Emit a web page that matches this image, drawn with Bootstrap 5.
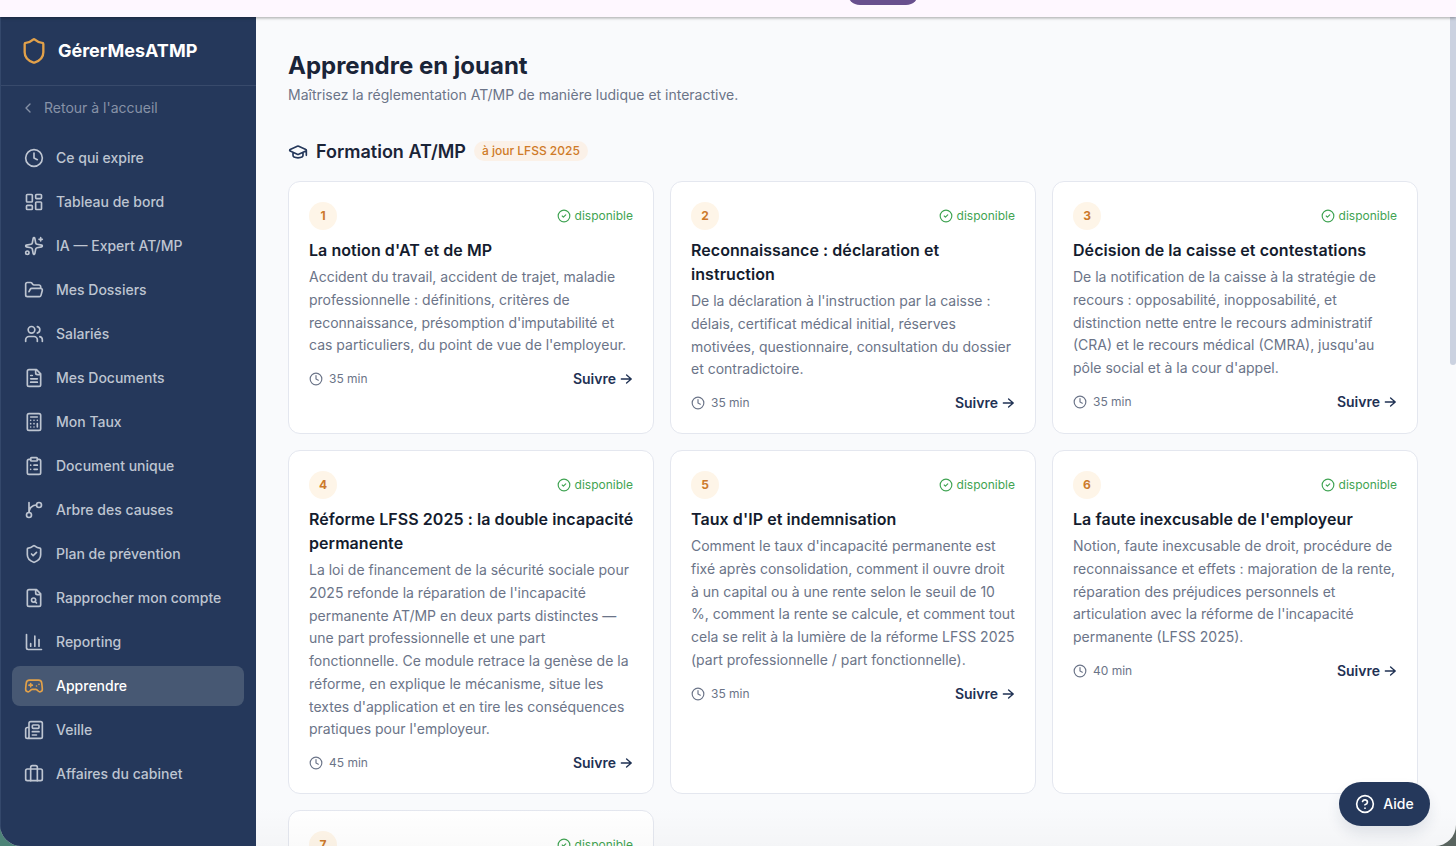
<!DOCTYPE html>
<html lang="fr">
<head>
<meta charset="utf-8">
<meta name="viewport" content="width=device-width, initial-scale=1">
<title>GérerMesATMP</title>
<link href="https://cdn.jsdelivr.net/npm/bootstrap@5.3.0/dist/css/bootstrap.min.css" rel="stylesheet">
<style>
body{font-family:Inter,"Liberation Sans",sans-serif;font-size:14px;line-height:20px;background:linear-gradient(90deg,#4d8478 0,#4d8478 50%,#59645f 50%);color:#1a2438;height:846px;overflow:hidden}
svg.ico{fill:none;stroke:currentColor;stroke-width:2;stroke-linecap:round;stroke-linejoin:round;width:20px;height:20px;flex:none}
svg.s14{width:14px;height:14px}svg.s16{width:16px;height:16px}
.topbar{height:17px;background:#fef7ff;z-index:3;box-shadow:0 1px 3px rgba(0,0,0,.35);overflow:hidden}
.topbar .pill{width:72px;height:26px;border-radius:13px;background:#68508e;margin:-21px 0 0 847px}
.shell{height:829px;border-radius:0 0 21px 21px;overflow:hidden;background:#f9fafc}
.side{width:256px;background:#25385b;border-left:1px solid #34486b;color:#bec5d1;font-weight:500}
.brand{height:69px;padding-left:19px;border-bottom:1px solid #384a6b;color:#fff;font-size:18px;font-weight:700;gap:10px}
.brand svg{width:28px;height:28px;color:#e2a14a}
.back{height:40px;margin:2px 0 10px;padding-left:19px;gap:8px;color:#8792a7;font-weight:400}
.side .nav-link{height:40px;margin:0 12px 4px 11px;padding:0 12px;gap:12px;border-radius:8px;color:inherit}
.side .nav-link.active{background:#475873;color:#fff}
.side .nav-link.active svg{color:#e2a14a}
.page{padding:33px 38px 0 32px}
h1{font-size:24px;line-height:32px;font-weight:700;margin:0}
h2{font-size:18px;line-height:28px;font-weight:600;margin:0}
.sub{color:#6b7488;margin:3px 0 33px;line-height:20px}
.tag{background:#fbf1e8;color:#cf7a27;font-size:12px;line-height:16px;font-weight:500;padding:2px 8px;border-radius:10px;margin-bottom:2px}
.modules{display:grid;grid-template-columns:repeat(3,1fr);gap:16px;margin-top:15px}
.module{background:#fff;border:1px solid #e4e7ef;border-radius:12px;padding:20px}
.num{width:28px;height:28px;background:#fef5e8;color:#cc7a2c;font-size:12px;font-weight:700}
.avail{color:#3fa352;font-size:12px;gap:4px}
h3{font-size:16px;line-height:24px;font-weight:600;letter-spacing:.065px;margin:8px -6px 4px 0;color:#141c2e}
.desc{line-height:22.75px;color:#6b7488;margin:0 0 12px}
.dur{font-size:12px;color:#6b7488;gap:6px}
.follow{font-weight:600;color:#1f3153;gap:3px}
.follow svg{stroke-width:2.3}
.scroll{width:6px;height:348px;background:#cbd2e0;top:0;right:0;border-radius:0 0 3px 3px}
.fade-end{left:256px;right:0;bottom:0;height:40px;background:linear-gradient(rgba(0,0,0,0),rgba(0,0,0,.02))}
.help{right:26px;bottom:20px;width:91px;height:44px;border-radius:22px;background:#25385b;color:#fff;font-weight:500;gap:8px;box-shadow:0 8px 14px rgba(30,45,75,.1)}
</style>
</head>
<body>
<div class="topbar position-relative"><div class="pill"></div></div>
<div class="shell d-flex position-relative">
<aside class="side flex-shrink-0">
<div class="brand d-flex align-items-center"><svg class="ico" viewBox="0 0 24 24"><path d="M20 13c0 5-3.500 7.500-7.660 8.950a1 1 0 0 1-.670-.010C7.500 20.500 4 18 4 13V6a1 1 0 0 1 1-1c2 0 4.500-1.200 6.240-2.720a1.170 1.170 0 0 1 1.520 0C14.510 3.810 17 5 19 5a1 1 0 0 1 1 1z"/></svg><span>GérerMesATMP</span></div>
<div class="back d-flex align-items-center"><svg class="ico s16" viewBox="0 0 24 24"><path d="m15 18-6-6 6-6"/></svg><span>Retour à l'accueil</span></div>
<nav class="nav flex-column flex-nowrap" id="menu"></nav>
</aside>
<main class="page flex-grow-1">
<h1>Apprendre en jouant</h1>
<p class="sub">Maîtrisez la réglementation AT/MP de manière ludique et interactive.</p>
<div class="d-flex align-items-center gap-2"><svg class="ico" viewBox="0 0 24 24" style="color:#25385b"><path d="M21.420 10.922a1 1 0 0 0-.019-1.838L12.830 5.180a2 2 0 0 0-1.660 0L2.600 9.080a1 1 0 0 0 0 1.832l8.570 3.908a2 2 0 0 0 1.660 0zM22 10v6M6 12.500V16a6 3 0 0 0 12 0v-3.500"/></svg><h2>Formation AT/MP</h2><span class="tag">à jour LFSS 2025</span></div>
<div class="modules" id="modules"></div>
</main>
<div class="scroll position-absolute"></div>
<div class="fade-end position-absolute"></div>
<div class="help position-absolute d-flex align-items-center justify-content-center"><svg class="ico" viewBox="0 0 24 24"><circle cx="12" cy="12" r="10"/><path d="M9.090 9a3 3 0 0 1 5.830 1c0 2-3 3-3 3M12 17h.01"/></svg><span>Aide</span></div>
</div>
<script>
const icon=(body,cls='')=>`<svg class="ico ${cls}" viewBox="0 0 24 24">${body}</svg>`;
const clock='<circle cx="12" cy="12" r="10"/><path d="M12 6v6l4 2"/>';
const file='<path d="M15 2H6a2 2 0 0 0-2 2v16a2 2 0 0 0 2 2h12a2 2 0 0 0 2-2V7zM14 2v4a2 2 0 0 0 2 2h4"/>';
const items=[
['Ce qui expire',clock],
['Tableau de bord','<rect width="7" height="9" x="3" y="3" rx="1"/><rect width="7" height="5" x="14" y="3" rx="1"/><rect width="7" height="9" x="14" y="12" rx="1"/><rect width="7" height="5" x="3" y="16" rx="1"/>'],
['IA — Expert AT/MP','<path d="M11.017 2.814a1 1 0 0 1 1.966 0l1.051 5.558a2 2 0 0 0 1.594 1.594l5.558 1.051a1 1 0 0 1 0 1.966l-5.558 1.051a2 2 0 0 0-1.594 1.594l-1.051 5.558a1 1 0 0 1-1.966 0l-1.051-5.558a2 2 0 0 0-1.594-1.594l-5.558-1.051a1 1 0 0 1 0-1.966l5.558-1.051a2 2 0 0 0 1.594-1.594zM20 2v4M22 4h-4"/><circle cx="4" cy="20" r="2"/>'],
['Mes Dossiers','<path d="m6 14 1.500-2.900A2 2 0 0 1 9.240 10H20a2 2 0 0 1 1.940 2.500l-1.540 6a2 2 0 0 1-1.950 1.500H4a2 2 0 0 1-2-2V5a2 2 0 0 1 2-2h3.900a2 2 0 0 1 1.690.9l.810 1.200a2 2 0 0 0 1.670.9H18a2 2 0 0 1 2 2v2"/>'],
['Salariés','<path d="M16 21v-2a4 4 0 0 0-4-4H6a4 4 0 0 0-4 4v2M22 21v-2a4 4 0 0 0-3-3.870M16 3.130a4 4 0 0 1 0 7.750"/><circle cx="9" cy="7" r="4"/>'],
['Mes Documents',file+'<path d="M10 9H8M16 13H8M16 17H8"/>'],
['Mon Taux','<rect width="16" height="20" x="4" y="2" rx="2"/><path d="M8 6h8M16 14v4M16 10h.01M12 10h.01M8 10h.01M12 14h.01M8 14h.01M12 18h.01M8 18h.01"/>'],
['Document unique','<rect width="8" height="4" x="8" y="2" rx="1"/><path d="M16 4h2a2 2 0 0 1 2 2v14a2 2 0 0 1-2 2H6a2 2 0 0 1-2-2V6a2 2 0 0 1 2-2h2M12 11h4M12 16h4M8 11h.01M8 16h.01"/>'],
['Arbre des causes','<path d="M6 3v12M15 6a9 9 0 0 0-9 9"/><circle cx="18" cy="6" r="3"/><circle cx="6" cy="18" r="3"/>'],
['Plan de prévention','<path d="M20 13c0 5-3.500 7.500-7.660 8.950a1 1 0 0 1-.670-.010C7.500 20.500 4 18 4 13V6a1 1 0 0 1 1-1c2 0 4.500-1.200 6.240-2.720a1.170 1.170 0 0 1 1.520 0C14.510 3.810 17 5 19 5a1 1 0 0 1 1 1zM9 12l2 2 4-4"/>'],
['Rapprocher mon compte',file+'<circle cx="11.500" cy="14.500" r="2.500"/><path d="M13.300 16.300 15 18"/>'],
['Reporting','<path d="M3 3v16a2 2 0 0 0 2 2h16M8 17v-3M13 17V5M18 17V9"/>'],
['Apprendre','<path d="M6 11h4M8 9v4M15 12h.01M18 10h.01M17.320 5H6.680a4 4 0 0 0-3.978 3.590C2.604 9.416 2 14.456 2 16a3 3 0 0 0 3 3c1 0 1.500-.5 2-1l1.414-1.414A2 2 0 0 1 9.828 16h4.344a2 2 0 0 1 1.414.586L17 18c.5.5 1 1 2 1a3 3 0 0 0 3-3c0-1.545-.604-6.584-.685-7.258A4 4 0 0 0 17.320 5z"/>'],
['Veille','<path d="M4 22h16a2 2 0 0 0 2-2V4a2 2 0 0 0-2-2H8a2 2 0 0 0-2 2v16a2 2 0 0 1-4 0v-9a2 2 0 0 1 2-2h2M18 14h-8M15 18h-5"/><rect x="10" y="6" width="8" height="4" rx="1"/>'],
['Affaires du cabinet','<rect x="2" y="6" width="20" height="14" rx="2"/><path d="M16 20V4a2 2 0 0 0-2-2h-4a2 2 0 0 0-2 2v16"/>']];
document.getElementById('menu').innerHTML=items.map(([t,i])=>`<a class="nav-link d-flex align-items-center${t==='Apprendre'?' active':''}">${icon(i)}<span>${t}</span></a>`).join('');
const modules=[
["La notion d'AT et de MP","Accident du travail, accident de trajet, maladie professionnelle : définitions, critères de reconnaissance, présomption d'imputabilité et cas particuliers, du point de vue de l'employeur.",35],
["Reconnaissance : déclaration et instruction","De la déclaration à l'instruction par la caisse : délais, certificat médical initial, réserves motivées, questionnaire, consultation du dossier et contradictoire.",35],
["Décision de la caisse et contestations","De la notification de la caisse à la stratégie de recours : opposabilité, inopposabilité, et distinction nette entre le recours administratif (CRA) et le recours médical (CMRA), jusqu'au pôle social et à la cour d'appel.",35],
["Réforme LFSS 2025 : la double incapacité permanente","La loi de financement de la sécurité sociale pour 2025 refonde la réparation de l'incapacité permanente AT/MP en deux parts distinctes — une part professionnelle et une part fonctionnelle. Ce module retrace la genèse de la réforme, en explique le mécanisme, situe les textes d'application et en tire les conséquences pratiques pour l'employeur.",45],
["Taux d'IP et indemnisation","Comment le taux d'incapacité permanente est fixé après consolidation, comment il ouvre droit à un capital ou à une rente selon le seuil de 10 %, comment la rente se calcule, et comment tout cela se relit à la lumière de la réforme LFSS 2025 (part professionnelle / part fonctionnelle).",35],
["La faute inexcusable de l'employeur","Notion, faute inexcusable de droit, procédure de reconnaissance et effets : majoration de la rente, réparation des préjudices personnels et articulation avec la réforme de l'incapacité permanente (LFSS 2025).",40],
null];
document.getElementById('modules').innerHTML=modules.map((m,i)=>`<article class="module"><div class="d-flex justify-content-between align-items-center"><span class="num rounded-circle d-flex align-items-center justify-content-center">${i+1}</span><span class="avail d-flex align-items-center">${icon('<circle cx="12" cy="12" r="10"/><path d="m9 12 2 2 4-4"/>','s14')}disponible</span></div>${m?`<h3>${m[0]}</h3><p class="desc">${m[1]}</p><div class="d-flex justify-content-between align-items-center"><span class="dur d-flex align-items-center">${icon(clock,'s14')}${m[2]} min</span><span class="follow d-flex align-items-center">Suivre${icon('<path d="M4 12h17M13 5l8 7-8 7"/>','s14')}</span></div>`:''}</article>`).join('');
</script>
<script src="https://cdn.jsdelivr.net/npm/bootstrap@5.3.0/dist/js/bootstrap.bundle.min.js"></script>
</body>
</html>
